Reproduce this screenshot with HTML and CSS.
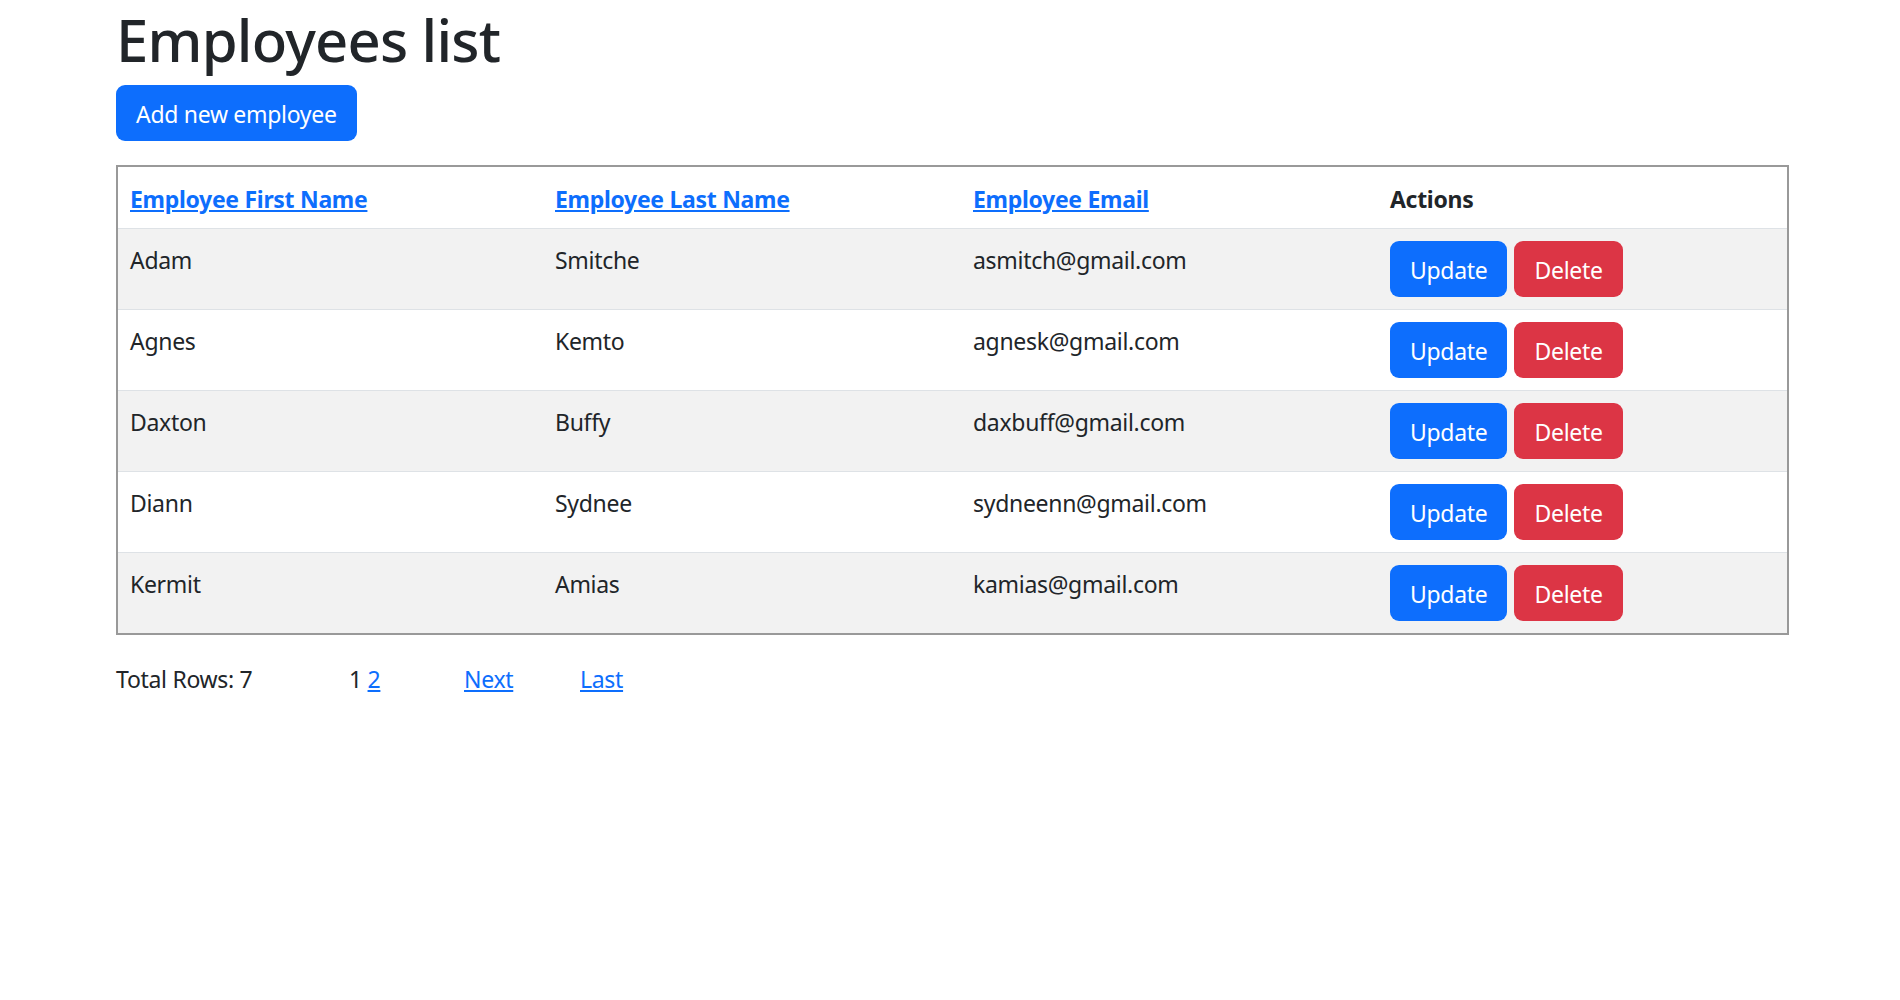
FILE: index.html
```html
<!DOCTYPE html>
<html lang="en">
<head>
<meta charset="utf-8">
<title>Employees list</title>
<link rel="stylesheet" href="styles.css">
</head>
<body>
<div class="container">
  <h1 class="title">Employees list</h1>
  <a class="btn btn-primary btn-add" href="#">Add new employee</a>
  <table class="emp-table">
    <colgroup>
      <col class="c1"><col class="c2"><col class="c3"><col class="c4">
    </colgroup>
    <thead>
      <tr>
        <th><a href="#">Employee First Name</a></th>
        <th><a href="#">Employee Last Name</a></th>
        <th><a href="#">Employee Email</a></th>
        <th>Actions</th>
      </tr>
    </thead>
    <tbody>
      <tr class="odd">
        <td>Adam</td><td>Smitche</td><td>asmitch@gmail.com</td>
        <td class="actions"><a class="btn btn-primary" href="#">Update</a><a class="btn btn-danger" href="#">Delete</a></td>
      </tr>
      <tr>
        <td>Agnes</td><td>Kemto</td><td>agnesk@gmail.com</td>
        <td class="actions"><a class="btn btn-primary" href="#">Update</a><a class="btn btn-danger" href="#">Delete</a></td>
      </tr>
      <tr class="odd">
        <td>Daxton</td><td>Buffy</td><td>daxbuff@gmail.com</td>
        <td class="actions"><a class="btn btn-primary" href="#">Update</a><a class="btn btn-danger" href="#">Delete</a></td>
      </tr>
      <tr>
        <td>Diann</td><td>Sydnee</td><td>sydneenn@gmail.com</td>
        <td class="actions"><a class="btn btn-primary" href="#">Update</a><a class="btn btn-danger" href="#">Delete</a></td>
      </tr>
      <tr class="odd last">
        <td>Kermit</td><td>Amias</td><td>kamias@gmail.com</td>
        <td class="actions"><a class="btn btn-primary" href="#">Update</a><a class="btn btn-danger" href="#">Delete</a></td>
      </tr>
    </tbody>
  </table>
  <div class="pager">
    <span class="total">Total Rows: 7</span>
    <span class="pages">1 <a href="#">2</a></span>
    <a class="next" href="#">Next</a>
    <a class="last-link" href="#">Last</a>
  </div>
</div>
</body>
</html>
```
FILE: styles.css
```css
html, body {
  margin: 0;
  padding: 0;
  background: #fff;
}
body {
  font-family: "Noto Sans", "Open Sans", sans-serif;
  font-size: 23px;
  letter-spacing: -0.3px;
  line-height: 36px;
  color: #212529;
}
.container {
  padding-left: 116px;
  width: 1673px;
}
.title {
  margin: 4px 0 9px 0;
  font-size: 58px;
  letter-spacing: -0.8px;
  line-height: 72px;
  font-weight: 500;
  color: #212529;
}
.btn {
  display: inline-block;
  box-sizing: border-box;
  height: 56px;
  padding: 11px 20px 9px;
  border-radius: 9px;
  color: #fff;
  text-decoration: none;
  font-size: 23px;
  line-height: 36px;
  vertical-align: top;
}
.btn-primary { background: #0d6efd; }
.btn-danger { background: #dc3545; }
.btn-add { margin-bottom: 24px; }
.actions .btn-danger { margin-left: 7px; }
.emp-table {
  width: 1673px;
  border-collapse: separate;
  border-spacing: 0;
  border: 2px solid #999;
}
.c1 { width: 425px; }
.c2 { width: 418px; }
.c3 { width: 417px; }
.c4 { width: auto; }
.emp-table th, .emp-table td {
  text-align: left;
  vertical-align: top;
  padding: 13px 12px 11px;
  border-bottom: 1px solid #dee2e6;
}
.emp-table th {
  font-weight: 700;
  padding-top: 14px;
  padding-bottom: 11px;
}
.emp-table th a {
  color: #0d6efd;
  text-decoration: underline;
}
.emp-table tr.odd td { background: #f2f2f2; }
.emp-table tr.last td { border-bottom: 0; }
.emp-table td.actions { padding-top: 12px; padding-bottom: 12px; }
.pager {
  display: flex;
  margin-top: 26px;
}
.pager a { color: #0d6efd; text-decoration: underline; }
.total { width: 233px; }
.pages { width: 115px; }
.next { width: 116px; }
```
